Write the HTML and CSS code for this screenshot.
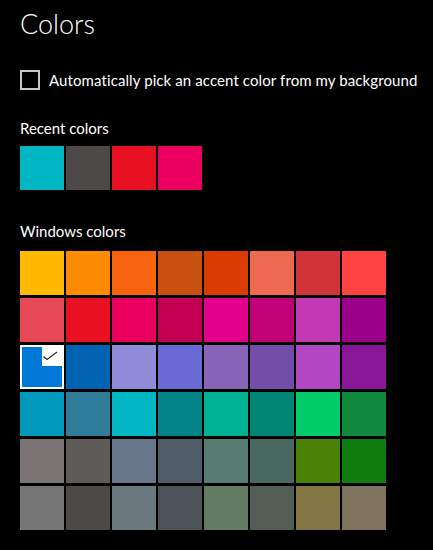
FILE: index.html
```html
<!DOCTYPE html>
<html>
<head>
<meta charset="utf-8">
<link rel="stylesheet" href="styles.css">
</head>
<body>
<div class="page">
  <h1 class="title">Colors</h1>
  <label class="check-row">
    <span class="checkbox"></span>
    <span class="check-label">Automatically pick an accent color from my background</span>
  </label>
  <div class="section-label recent-label">Recent colors</div>
  <div class="recent">
    <div class="swatch" style="background:#00B7C3"></div>
    <div class="swatch" style="background:#4C4A48"></div>
    <div class="swatch" style="background:#E81123"></div>
    <div class="swatch" style="background:#EA005E"></div>
  </div>
  <div class="section-label windows-label">Windows colors</div>
  <div class="grid">
    <div class="swatch" style="background:#FFB900"></div>
    <div class="swatch" style="background:#FF8C00"></div>
    <div class="swatch" style="background:#F7630C"></div>
    <div class="swatch" style="background:#CA5010"></div>
    <div class="swatch" style="background:#DA3B01"></div>
    <div class="swatch" style="background:#EF6950"></div>
    <div class="swatch" style="background:#D13438"></div>
    <div class="swatch" style="background:#FF4343"></div>

    <div class="swatch" style="background:#E74856"></div>
    <div class="swatch" style="background:#E81123"></div>
    <div class="swatch" style="background:#EA005E"></div>
    <div class="swatch" style="background:#C30052"></div>
    <div class="swatch" style="background:#E3008C"></div>
    <div class="swatch" style="background:#BF0077"></div>
    <div class="swatch" style="background:#C239B3"></div>
    <div class="swatch" style="background:#9A0089"></div>

    <div class="swatch selected" style="background:#0078D7">
      <span class="tick">
        <svg width="20" height="19" viewBox="0 0 20 19"><path d="M1.5 9.5 L5 12.5 L15 5" fill="none" stroke="#222" stroke-width="1.1"/></svg>
      </span>
    </div>
    <div class="swatch" style="background:#0063B1"></div>
    <div class="swatch" style="background:#8E8CD8"></div>
    <div class="swatch" style="background:#6B69D6"></div>
    <div class="swatch" style="background:#8764B8"></div>
    <div class="swatch" style="background:#744DA9"></div>
    <div class="swatch" style="background:#B146C2"></div>
    <div class="swatch" style="background:#881798"></div>

    <div class="swatch" style="background:#0099BC"></div>
    <div class="swatch" style="background:#2D7D9A"></div>
    <div class="swatch" style="background:#00B7C3"></div>
    <div class="swatch" style="background:#038387"></div>
    <div class="swatch" style="background:#00B294"></div>
    <div class="swatch" style="background:#018574"></div>
    <div class="swatch" style="background:#00CC6A"></div>
    <div class="swatch" style="background:#10893E"></div>

    <div class="swatch" style="background:#7A7574"></div>
    <div class="swatch" style="background:#5D5A58"></div>
    <div class="swatch" style="background:#68768A"></div>
    <div class="swatch" style="background:#515C6B"></div>
    <div class="swatch" style="background:#567C73"></div>
    <div class="swatch" style="background:#486860"></div>
    <div class="swatch" style="background:#498205"></div>
    <div class="swatch" style="background:#107C10"></div>

    <div class="swatch" style="background:#767676"></div>
    <div class="swatch" style="background:#4C4A48"></div>
    <div class="swatch" style="background:#69797E"></div>
    <div class="swatch" style="background:#4A5459"></div>
    <div class="swatch" style="background:#647C64"></div>
    <div class="swatch" style="background:#525E54"></div>
    <div class="swatch" style="background:#847545"></div>
    <div class="swatch" style="background:#7E735F"></div>
  </div>
</div>
</body>
</html>
```
FILE: styles.css
```css
html, body {
  margin: 0;
  padding: 0;
  background: #000;
}
body {
  color: #fff;
  font-family: "Segoe UI", Lato, "Noto Sans", sans-serif;
  width: 433px;
  height: 550px;
  overflow: hidden;
}
.page {
  padding: 4px 0 0 20px;
}
.title {
  margin: 0;
  font-weight: 300;
  font-size: 27px;
  line-height: 40px;
  letter-spacing: 0;
}
.check-row {
  display: flex;
  align-items: center;
  gap: 9px;
  margin-top: 26px;
  height: 20px;
}
.checkbox {
  width: 16px;
  height: 16px;
  border: 2px solid #c8c8c8;
  flex: none;
}
.check-label {
  font-size: 15px;
  line-height: 20px;
  color: #fff;
  white-space: nowrap;
  letter-spacing: 0.1px;
}
.section-label {
  font-size: 15px;
  line-height: 20px;
}
.recent-label {
  margin-top: 28px;
}
.recent {
  display: flex;
  gap: 2px;
  margin-top: 8px;
}
.swatch {
  width: 44px;
  height: 44px;
  box-sizing: border-box;
  position: relative;
}
.windows-label {
  margin-top: 31px;
}
.grid {
  display: grid;
  grid-template-columns: repeat(8, 44px);
  grid-auto-rows: 44px;
  column-gap: 2px;
  row-gap: 3px;
  margin-top: 10px;
}
.selected {
  border: 2px solid #fff;
}
.tick {
  position: absolute;
  top: 0;
  right: 0;
  width: 20px;
  height: 19px;
  background: #fff;
  display: block;
}
.tick svg {
  display: block;
}
```
